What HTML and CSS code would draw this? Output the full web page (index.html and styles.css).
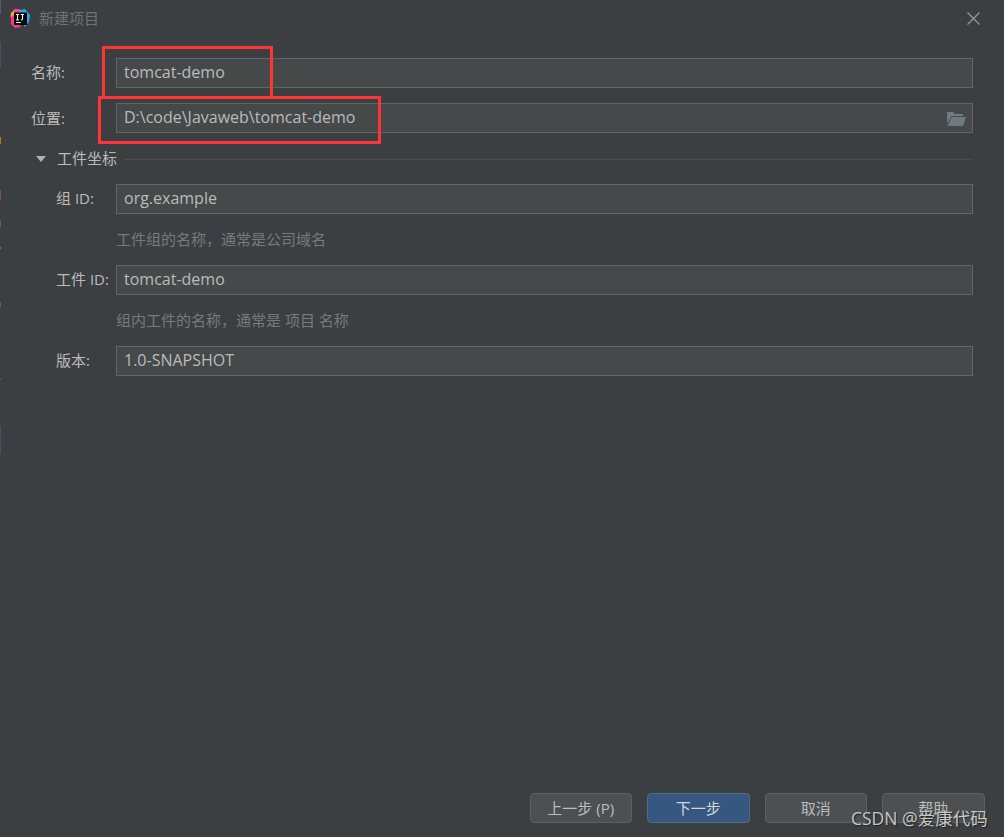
FILE: index.html
```html
<!DOCTYPE html>
<html lang="en">
<head>
  <meta charset="UTF-8">
  <title>新建项目</title>
  <link rel="stylesheet" href="styles.css">
</head>
<body>
  <div class="dialog">
    <div class="edge"></div>

    <!-- Title bar -->
    <div class="title-bar">
      <svg class="app-logo" width="20" height="19" viewBox="0 0 20 19">
        <path d="M10 1 L15 0 L20 6 L19 13 L15 18 L10 10 Z" fill="#21a9f0"/>
        <path d="M1 4 L5 0 L11 1 L4 10 L0.5 8 Z" fill="#f9a23a"/>
        <path d="M1 8 L5 5 L11 18 L5 19 L1 15 Z" fill="#ee3f86"/>
        <path d="M4 0.5 L10 0 L10 4 L4 4 Z" fill="#ea4a9c"/>
        <rect x="4" y="3.5" width="13" height="12.5" fill="#050505"/>
        <rect x="6" y="13" width="5" height="1" fill="#e8e8e8"/>
        <path d="M6 5.5 H9 M7.5 5.5 V11 M6 11 H9 M10.5 5.5 H14 M12.5 5.5 V10 Q12.5 11 11 11" stroke="#f2f2f2" stroke-width="1.1" fill="none"/>
      </svg>
      <span class="title-text">新建项目</span>
      <svg class="close-icon" width="13" height="13" viewBox="0 0 13 13">
        <path d="M0.5 0.5 L12.5 12.5 M12.5 0.5 L0.5 12.5" stroke="#9a9c9e" stroke-width="1.1" fill="none"/>
      </svg>
    </div>

    <!-- Form -->
    <div class="form">
      <div class="row">
        <label class="row-label">名称:</label>
        <div class="field">tomcat-demo</div>
      </div>
      <div class="row row-location">
        <label class="row-label">位置:</label>
        <div class="field">
          D:\code\Javaweb\tomcat-demo
          <svg class="folder-icon" width="19" height="14" viewBox="0 0 19 14">
            <path d="M0 0 H6 L8 2 H16 V4 H4.5 L0 12 Z" fill="#6e7b7f"/>
            <path d="M4.5 5 H19 L16 14 H0.5 Z" fill="#6e7b7f"/>
          </svg>
        </div>
      </div>

      <div class="section-head">
        <span class="arrow"></span>
        <span class="section-title">工件坐标</span>
        <span class="section-line"></span>
      </div>

      <div class="sub">
        <div class="row">
          <label class="row-label">组 ID:</label>
          <div class="field">org.example</div>
        </div>
        <p class="hint">工件组的名称，通常是公司域名</p>
        <div class="row">
          <label class="row-label">工件 ID:</label>
          <div class="field">tomcat-demo</div>
        </div>
        <p class="hint">组内工件的名称，通常是 项目 名称</p>
        <div class="row">
          <label class="row-label">版本:</label>
          <div class="field">1.0-SNAPSHOT</div>
        </div>
      </div>
    </div>

    <!-- Bottom buttons -->
    <div class="buttons">
      <button class="btn">上一步 (P)</button>
      <button class="btn btn-primary">下一步</button>
      <button class="btn">取消</button>
      <button class="btn">帮助</button>
    </div>

    <!-- Annotations on top of the screenshot -->
    <div class="mark mark-name"></div>
    <div class="mark mark-location"></div>
    <div class="watermark">CSDN @爱康代码</div>
  </div>
</body>
</html>
```

FILE: styles.css
```css
/* Page */
html, body {
  margin: 0;
  height: 100%;
}

body {
  background: #3c3f41;
  font-family: "Open Sans", "Noto Sans CJK SC", sans-serif;
  font-size: 15px;
  color: #bbbbbb;
  overflow: hidden;
}

.dialog {
  position: relative;
  height: 837px;
  display: flex;
  flex-direction: column;
  box-sizing: border-box;
}

/* Window behind the dialog showing at the left edge */
.edge {
  position: absolute;
  left: 0;
  top: 0;
  width: 1px;
  height: 470px;
  background: linear-gradient(to bottom,
    #55595c 0 14px, transparent 14px 42px,
    #45525a 42px 68px, transparent 68px 137px,
    #b5752f 137px 144px, transparent 144px 190px,
    #8a4f3a 190px 200px, transparent 200px 220px,
    #8a4f3a 220px 227px, transparent 227px 247px,
    #a0643a 247px 249px, transparent 249px 302px,
    #8a4f3a 302px 307px, transparent 307px 378px,
    #7a4a3a 378px 380px, transparent 380px 426px,
    #45525a 426px 454px, transparent 454px);
}

/* Title bar */
.title-bar {
  display: flex;
  align-items: center;
  height: 36px;
  padding: 0 24px 2px 10px;
  flex-shrink: 0;
}

.title-text {
  margin-left: 9px;
  padding-bottom: 2px;
  color: #6f7274;
}

.close-icon {
  margin-left: auto;
}

/* Form */
.form {
  flex: 1;
  padding: 20px 31px 0 31px;
}

.row {
  display: flex;
  align-items: center;
  height: 30px;
}

.row-label {
  width: 85px;
  padding-bottom: 4px;
  flex-shrink: 0;
}

.row-location {
  margin-top: 15px;
}

.row-location .row-label {
  padding-bottom: 2px;
}

.field {
  flex: 1;
  position: relative;
  display: flex;
  align-items: center;
  height: 30px;
  box-sizing: border-box;
  padding: 0 7px 2px;
  font-size: 16px;
  background: #45494a;
  border: 1px solid #646464;
}

.folder-icon {
  position: absolute;
  right: 6px;
  top: 8px;
}

/* Collapsible section */
.section-head {
  display: flex;
  align-items: center;
  height: 20px;
  margin-top: 16px;
  padding-left: 5px;
}

.arrow {
  width: 0;
  height: 0;
  border-left: 5px solid transparent;
  border-right: 5px solid transparent;
  border-top: 6px solid #afb1b3;
}

.section-title {
  margin-left: 11px;
  margin-bottom: 3px;
}

.section-line {
  flex: 1;
  height: 1px;
  margin-left: 7px;
  background: #4a4d4f;
}

.sub {
  margin-top: 15px;
  padding-left: 25px;
}

.sub .row-label {
  width: 60px;
}

.hint {
  margin: 0;
  height: 51px;
  line-height: 51px;
  padding-left: 60px;
  color: #787a7c;
}

/* Buttons */
.buttons {
  display: flex;
  justify-content: flex-end;
  gap: 15px;
  padding: 0 19.5px 14px 0;
}

.btn {
  width: 102.5px;
  height: 30px;
  padding: 0 0 2px;
  font-family: inherit;
  font-size: 15px;
  color: #bbbbbb;
  background: #4c5052;
  border: 1px solid #5e6060;
  border-radius: 4px;
}

.btn-primary {
  background: #365880;
  border-color: #4c708c;
  color: #d2d6da;
}

/* Red boxes */
.mark {
  position: absolute;
  box-sizing: border-box;
  border: 3px solid #ff3434;
}

.mark-name {
  left: 102px;
  top: 46px;
  width: 171px;
  height: 53px;
}

.mark-location {
  left: 98px;
  top: 96px;
  width: 283px;
  height: 48px;
}

/* Watermark */
.watermark {
  position: absolute;
  left: 851px;
  top: 806px;
  font-size: 17.5px;
  line-height: 24px;
  color: #c8c8c8;
  text-shadow: 1px 1px 1px #222222;
  white-space: nowrap;
}
```
